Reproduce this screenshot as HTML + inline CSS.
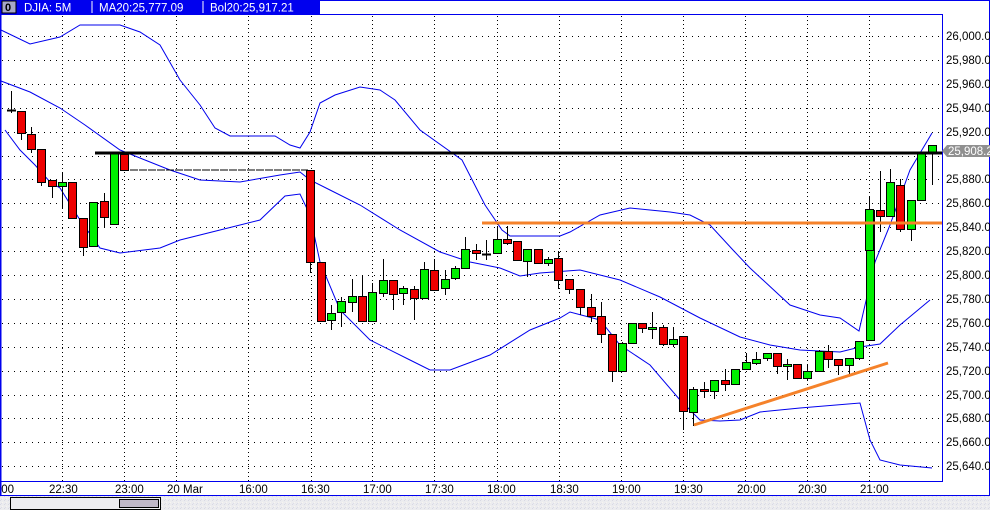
<!DOCTYPE html>
<html><head><meta charset="utf-8"><style>
html,body{margin:0;padding:0;background:#fff;}
body{width:990px;height:510px;overflow:hidden;position:relative;font-family:"Liberation Sans",sans-serif;}
</style></head><body>
<svg id="s" width="990" height="510" xmlns="http://www.w3.org/2000/svg" style="position:absolute;left:0;top:0" font-family="Liberation Sans, sans-serif">
<defs>
<pattern id="dith" width="4" height="4" patternUnits="userSpaceOnUse">
<rect width="4" height="4" fill="#ececef"/><rect x="0" y="0" width="1" height="1" fill="#d8d8e4"/><rect x="2" y="2" width="1" height="1" fill="#f8f4f0"/><rect x="1" y="3" width="1" height="1" fill="#dcdce8"/>
</pattern>
</defs>
<rect x="0" y="0" width="990" height="510" fill="#fff"/>
<g id="grid"></g>
<g id="bands" fill="none" stroke="#0000ee" stroke-width="1"></g>
<g id="candles"></g>
<!-- black resistance -->
<line x1="95" y1="153" x2="942" y2="153" stroke="#000" stroke-width="3"/>
<line x1="130" y1="170" x2="308" y2="170" stroke="#000" stroke-width="1" stroke-dasharray="8,1"/>
<!-- orange -->
<line x1="482" y1="223" x2="942" y2="223" stroke="#f5822a" stroke-width="3"/>
<line x1="694" y1="425" x2="888" y2="363" stroke="#f5822a" stroke-width="3"/>
<!-- frame -->
<rect x="0" y="0" width="320" height="14" fill="#0000ee"/>
<rect x="2" y="1" width="14" height="12" fill="#a8a8c8" stroke="#000" stroke-width="1"/>
<text x="5" y="11" font-size="11" font-weight="bold" fill="#000">0</text>
<line x1="92" y1="1" x2="92" y2="13" stroke="#fff"/>
<line x1="203" y1="1" x2="203" y2="13" stroke="#fff"/>
<text x="24" y="11.5" font-size="11.5" fill="#fff">DJIA: 5M</text>
<text x="99" y="11.5" font-size="11.5" fill="#fff">MA20:25,777.09</text>
<text x="210" y="11.5" font-size="11.5" fill="#fff">Bol20:25,917.21</text>
<line x1="320" y1="0.5" x2="990" y2="0.5" stroke="#0000ee"/>
<line x1="0" y1="14.5" x2="942" y2="14.5" stroke="#0000ee"/>
<line x1="942.5" y1="14" x2="942.5" y2="482" stroke="#0000ee"/>
<line x1="0" y1="481.5" x2="942" y2="481.5" stroke="#0000ee"/>
<line x1="0" y1="495.5" x2="990" y2="495.5" stroke="#0000ee"/>
<line x1="989.5" y1="0" x2="989.5" y2="496" stroke="#0000ee"/>
<line x1="0.5" y1="14" x2="0.5" y2="496" stroke="#0000ee" stroke-width="2"/>
<rect x="0" y="496" width="990" height="14" fill="url(#dith)"/>
<rect x="10.5" y="497.5" width="150" height="12" fill="#ededf0" stroke="#000"/>
<rect x="119.5" y="499.5" width="39" height="8" fill="#c0b8c8" stroke="#000"/>
<g id="axis" font-size="11.5" fill="#000"></g>
<!-- price tag -->
<polygon points="942,151 947,145 990,145 990,157 947,157" fill="#909090"/>
<text x="948" y="155" font-size="11.5" fill="#fff">25,908.2</text>
</svg>
<script>
var NS="http://www.w3.org/2000/svg";
function el(p,t,a){var e=document.createElementNS(NS,t);for(var k in a)e.setAttribute(k,a[k]);p.appendChild(e);return e;}
var g=document.getElementById('grid');
var vx=[62,124,176,248,311,372,434,497,559,621,683,745,807,869];
vx.forEach(function(x){el(g,'line',{x1:x+.5,y1:16,x2:x+.5,y2:481,stroke:'#000','stroke-dasharray':'1,3'});});
var ax=document.getElementById('axis');
for(var k=0;k<19;k++){var y=36+k*23.9;
 el(g,'line',{x1:2,y1:Math.round(y)+.5,x2:942,y2:Math.round(y)+.5,stroke:'#000','stroke-dasharray':'1,5'});
 var v=26000-20*k;var s=(v/1000|0)+','+String(v%1000).padStart(3,'0')+'.0';
 if(k!=5){var t=el(ax,'text',{x:946,y:Math.round(y)+4});t.textContent=s;}
}
var labs=[[0,':00'],[49,'22:30'],[115,'23:00'],[167,'20 Mar'],[239,'16:00'],[301,'16:30'],[363,'17:00'],[425,'17:30'],[487,'18:00'],[550,'18:30'],[612,'19:00'],[674,'19:30'],[737,'20:00'],[798,'20:30'],[860,'21:00']];
labs.forEach(function(l){var t=el(ax,'text',{x:l[0]+(l[1]==':00'?-2:0),y:493});t.textContent=l[1];});
var b=document.getElementById('bands');
function pl(pts){el(b,'polyline',{points:pts.map(function(p){return p.join(',')}).join(' ')});}
pl([[1,30],[30,44],[60,37],[80,25],[120,25],[140,32],[160,45],[180,80],[200,105],[215,128],[230,136],[275,136],[290,145],[300,148],[310,132],[320,103],[335,95],[360,87],[380,90],[395,100],[420,130],[462,160],[485,205],[502,230],[510,236],[560,236],[570,232],[600,215],[630,208],[670,212],[690,215],[710,225],[733,250],[750,268],[790,305],[820,315],[840,318],[859,331],[875,262],[890,225],[910,170],[932,133]]);
pl([[1,81],[30,92],[60,108],[85,125],[120,150],[170,170],[200,180],[240,182],[280,175],[300,172],[310,180],[330,190],[360,205],[400,230],[440,252],[470,262],[500,268],[520,276],[540,273],[580,270],[620,280],[660,297],[700,318],[740,337],[770,345],[800,350],[840,352],[860,347],[880,344],[900,325],[930,300]]);
pl([[5,130],[20,150],[35,165],[50,182],[60,188],[80,220],[100,248],[120,253],[160,248],[180,240],[220,230],[260,220],[285,196],[300,194],[310,215],[320,262],[340,310],[370,340],[410,360],[430,370],[450,370],[490,355],[530,330],[560,318],[570,312],[600,320],[620,345],[650,365],[680,400],[700,420],[720,421],[740,420],[760,412],[800,408],[860,403],[870,440],[880,460],[900,465],[932,468]]);
var C=[
[11,110,110,91,113,'d'],[21,111,133,111,140,'r'],[31,134,149,127,153,'r'],[41,149,182,149,186,'r'],[52,180,186,180,198,'r'],
[62,182,186,172,208,'g'],[72,182,218,182,218,'r'],[83,218,247,218,256,'r'],[93,202,246,202,246,'g'],[104,201,217,193,227,'r'],
[114,153,224,153,224,'g'],[124,154,170,154,170,'r'],
[310,170,262,170,273,'r'],[321,262,321,262,321,'r'],[331,313,320,305,330,'g'],[341,301,312,297,327,'g'],[352,296,302,279,312,'g'],
[362,296,321,276,321,'r'],[372,292,321,283,321,'g'],[383,280,293,259,297,'g'],[393,280,294,280,310,'r'],[403,288,293,286,305,'g'],
[414,289,298,286,320,'r'],[424,269,298,262,298,'g'],[434,270,290,259,290,'r'],[445,279,288,270,295,'g'],[455,268,278,266,280,'g'],
[465,249,268,237,268,'g'],[476,250,253,244,260,'r'],[486,254,254,240,260,'d'],[497,239,253,226,253,'g'],[507,239,243,226,245,'r'],
[517,241,260,241,260,'r'],[527,249,261,249,277,'g'],[538,249,263,249,263,'r'],[548,259,263,257,266,'g'],[558,258,280,251,289,'r'],
[569,279,289,279,294,'r'],[580,289,307,289,315,'r'],[591,307,316,294,322,'r'],[601,316,334,302,343,'r'],[612,334,371,334,382,'r'],
[622,343,371,342,371,'g'],[632,323,343,323,344,'g'],[642,323,328,323,333,'r'],[652,327,329,312,339,'g'],[663,327,344,325,346,'r'],
[673,339,344,327,347,'g'],[683,336,411,336,430,'r'],[693,389,412,387,426,'g'],[704,389,391,382,398,'r'],[714,380,391,380,399,'g'],
[725,380,384,369,391,'r'],[735,369,384,369,384,'g'],[746,362,369,353,370,'g'],[756,359,363,352,365,'g'],[767,353,358,353,361,'g'],
[777,353,366,353,374,'r'],[787,364,366,359,380,'g'],[797,364,378,364,378,'r'],[807,371,378,365,381,'g'],[819,351,371,350,371,'g'],
[828,351,359,345,368,'r'],[838,359,365,359,375,'r'],[849,358,365,358,375,'g'],[859,341,358,341,360,'g'],[870,210,340,210,340,'g'],
[869,209,250,196,250,'g'],[880,210,216,171,232,'r'],[890,182,216,169,216,'g'],[900,185,229,179,232,'r'],[911,200,229,200,241,'g'],
[921,152,200,152,200,'g'],[932,145,153,145,185,'g']];
var cg=document.getElementById('candles');
C.forEach(function(c){var x=c[0],t=Math.min(c[1],c[2]),bt=Math.max(c[1],c[2]);
 el(cg,'line',{x1:x+.5,y1:c[3],x2:x+.5,y2:c[4],stroke:'#000','stroke-width':1});
 if(c[5]=='d'){el(cg,'line',{x1:x-4,y1:t+.5,x2:x+5,y2:t+.5,stroke:'#000','stroke-width':2});return;}
 el(cg,'rect',{x:x-3.5,y:t+.5,width:8,height:Math.max(bt-t,2),fill:c[5]=='g'?'#00ee00':'#ee0000',stroke:'#000','stroke-width':1});
});
</script>
</body></html>
